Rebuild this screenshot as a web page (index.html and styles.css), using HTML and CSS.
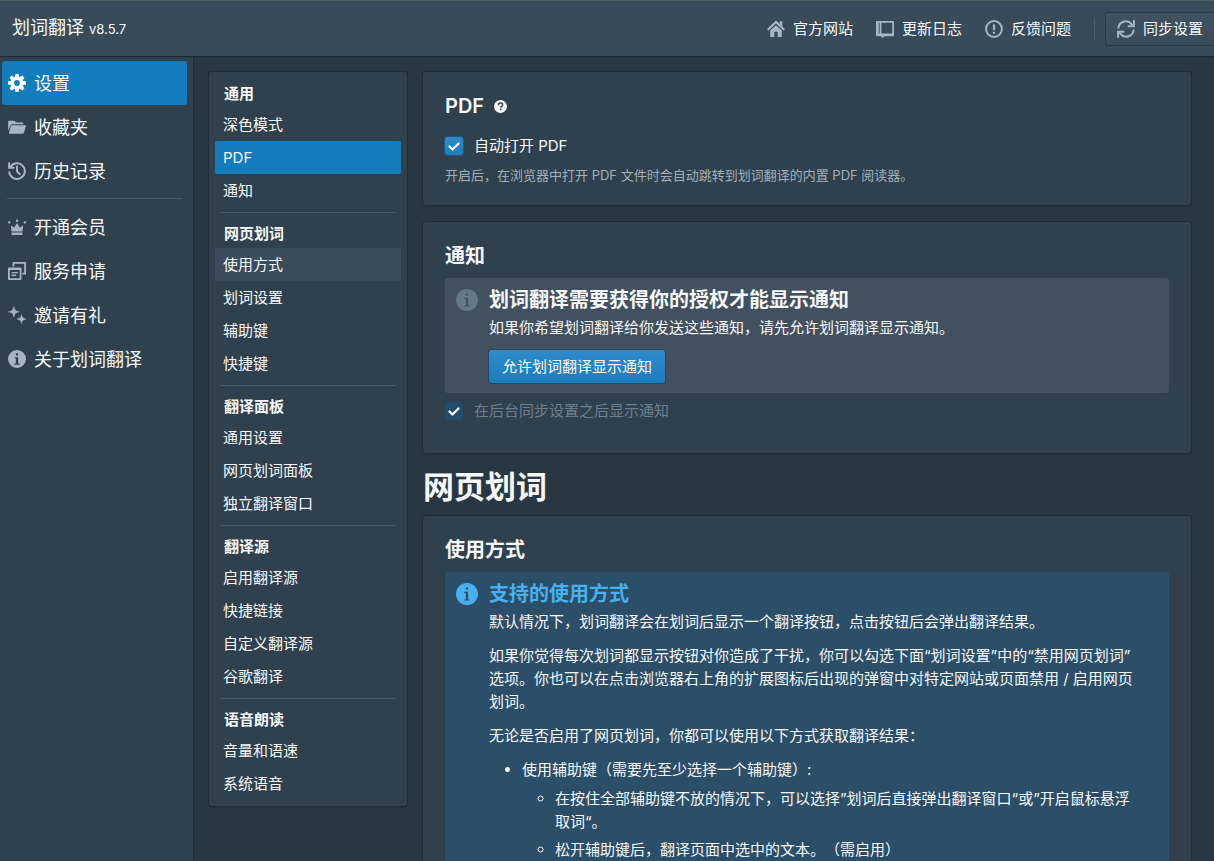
FILE: index.html
```html
<!DOCTYPE html>
<html lang="zh-CN">
<head>
<meta charset="utf-8">
<meta name="viewport" content="width=device-width, initial-scale=1">
<title>划词翻译 - 设置</title>
<link rel="stylesheet" href="styles.css">
</head>
<body>
<header class="topbar">
  <div class="brand">划词翻译 <small>v8.5.7</small></div>
  <nav class="toplinks">
    <a class="toplink" href="#site"><svg class="icon" viewBox="0 0 20 20"><path d="M1.500 10.300 10 2.300l8.500 8" fill="none" stroke="currentColor" stroke-width="2.400" stroke-linecap="round"/><path d="M14 1.500h3v6l-3-3z"/><path d="M3.500 11.700 10 5.700l6.500 6V18a1 1 0 0 1-1 1H12v-5a1 1 0 0 0-1-1H9a1 1 0 0 0-1 1v5H4.500a1 1 0 0 1-1-1z"/></svg>官方网站</a>
    <a class="toplink" href="#log"><svg class="icon" viewBox="0 0 20 20"><path fill-rule="evenodd" d="M1 1h18a1 1 0 0 1 1 1v15a1 1 0 0 1-1 1H9v2l-1.500-1L6 20v-2H1a1 1 0 0 1-1-1V2a1 1 0 0 1 1-1M6 3v12h12V3zM3 3v12h1V3z"/></svg>更新日志</a>
    <a class="toplink" href="#issue"><svg class="icon" viewBox="0 0 20 20"><circle cx="10" cy="10" r="8.800" fill="none" stroke="currentColor" stroke-width="2.200"/><path d="M8.800 5h2.400v6.500H8.800zM8.800 13h2.400v2.200H8.800z"/></svg>反馈问题</a>
    <span class="vline"></span>
    <button class="sync" type="button"><svg class="icon" viewBox="0 0 20 20"><g fill="none" stroke="currentColor" stroke-width="2.200"><path d="M1.500 9.500A8.300 8.300 0 0 1 16.200 4.600l1.500 1.500M18.500 10.500A8.300 8.300 0 0 1 3.800 15.400l-1.500-1.500"/><path d="M18.800 1v6h-6M1.200 19v-6h6" stroke-linecap="round"/></g></svg>同步设置</button>
  </nav>
</header>
<div class="shell">
  <nav class="sidebar">
    <a class="side-item active" href="#settings"><svg class="icon" viewBox="0 0 20 20"><g fill="currentColor"><path fill-rule="evenodd" d="M10 2.800a7.200 7.200 0 1 0 0 14.400 7.200 7.200 0 0 0 0-14.400M10 6.800a3.200 3.200 0 1 1 0 6.400 3.200 3.200 0 0 1 0-6.400"/><path id="tooth" d="M8.300 0h3.400l.8 4h-5z"/><use href="#tooth" transform="rotate(45 10 10)"/><use href="#tooth" transform="rotate(90 10 10)"/><use href="#tooth" transform="rotate(135 10 10)"/><use href="#tooth" transform="rotate(180 10 10)"/><use href="#tooth" transform="rotate(225 10 10)"/><use href="#tooth" transform="rotate(270 10 10)"/><use href="#tooth" transform="rotate(315 10 10)"/></g></svg>设置</a>
    <a class="side-item" href="#fav"><svg class="icon" viewBox="0 0 20 20"><path d="M.200 14.500V4c0-.6.400-1 1-1h5.500c.3 0 .5.100.7.300L9 5h7c.6 0 1 .4 1 1v1H4.500c-.7 0-1.300.4-1.500 1z"/><path d="M4.300 8H19c.7 0 1.100.6.900 1.200l-2.300 7.600c-.1.400-.5.700-.9.700H1.900c-.7 0-1.100-.6-.9-1.200l2.400-7.600c.1-.4.500-.7.900-.7"/></svg>收藏夹</a>
    <a class="side-item" href="#history"><svg class="icon" viewBox="0 0 20 20"><g fill="none" stroke="currentColor" stroke-width="2.200" stroke-linecap="round"><path d="M2.600 5.500A8.700 8.700 0 1 1 1.400 11.500M1.200 1.500v5h5M10 5v5.500l3 3"/></g></svg>历史记录</a>
    <hr>
    <a class="side-item" href="#vip"><svg class="icon" viewBox="0 0 20 20"><path d="M4 15 3 8.200l4 2.300L10 5.500l3 5 4-2.300L16 15zM4 16h12v3H4z"/><circle cx="1.300" cy="4.800" r="1.300"/><circle cx="10" cy="3" r="1.400"/><circle cx="18.700" cy="4.800" r="1.300"/></svg>开通会员</a>
    <a class="side-item" href="#service"><svg class="icon" viewBox="0 0 20 20"><path fill-rule="evenodd" d="M1 6h13a1 1 0 0 1 1 1v12a1 1 0 0 1-1 1H1a1 1 0 0 1-1-1V7a1 1 0 0 1 1-1m1 3v9h11V9z"/><path d="M6 0h13a1 1 0 0 1 1 1v12a1 1 0 0 1-1 1h-3v-2h2V2H7v3H5V1a1 1 0 0 1 1-1M4 11h7v1.500H4zM4 14h5v1.500H4z"/></svg>服务申请</a>
    <a class="side-item" href="#invite"><svg class="icon" viewBox="0 0 20 20"><path d="M6.500.500c.7 4 1.800 5.200 6 6-4.200.8-5.300 2-6 6-.7-4-1.800-5.200-6-6 4.200-.8 5.300-2 6-6M15 9.500c.6 3.400 1.800 4.500 5 5-3.200.5-4.400 1.600-5 5-.6-3.400-1.800-4.500-5-5 3.200-.5 4.400-1.600 5-5" stroke="currentColor" stroke-width=".6"/></svg>邀请有礼</a>
    <a class="side-item" href="#about"><svg class="icon" viewBox="0 0 20 20"><path fill-rule="evenodd" d="M10 0a10 10 0 1 0 0 20 10 10 0 0 0 0-20M8.700 3.500h2.600V6H8.700zM7.500 8h3.800v7H13v1.300H7V15h1.700V9.300H7.500z"/></svg>关于划词翻译</a>
  </nav>
  <main class="main">
    <nav class="card submenu">
      <h6>通用</h6>
      <a href="#dark">深色模式</a>
      <a class="active" href="#pdf">PDF</a>
      <a href="#notice">通知</a>
      <hr>
      <h6>网页划词</h6>
      <a class="hover" href="#usage">使用方式</a>
      <a href="#select">划词设置</a>
      <a href="#modifier">辅助键</a>
      <a href="#shortcut">快捷键</a>
      <hr>
      <h6>翻译面板</h6>
      <a href="#general">通用设置</a>
      <a href="#panel">网页划词面板</a>
      <a href="#window">独立翻译窗口</a>
      <hr>
      <h6>翻译源</h6>
      <a href="#sources">启用翻译源</a>
      <a href="#links">快捷链接</a>
      <a href="#custom">自定义翻译源</a>
      <a href="#google">谷歌翻译</a>
      <hr>
      <h6>语音朗读</h6>
      <a href="#volume">音量和语速</a>
      <a href="#voice">系统语音</a>
    </nav>
    <div class="content">
      <section class="card panel" id="pdf">
        <h5>PDF <svg class="help" viewBox="0 0 20 20"><circle cx="10" cy="10" r="10"/><path d="M6.800 8c0-2 1.300-3.300 3.300-3.300S13.300 5.900 13.300 7.500c0 2.200-3 2.300-3 4.500" fill="none" stroke="#2f404d" stroke-width="2.200"/><path d="M9 13.500h2.500v2.300H9z" fill="#2f404d"/></svg></h5>
        <label class="check"><input type="checkbox" checked>自动打开 PDF</label>
        <p class="hint">开启后，在浏览器中打开 PDF 文件时会自动跳转到划词翻译的内置 PDF 阅读器。</p>
      </section>
      <section class="card panel" id="notice">
        <h5>通知</h5>
        <div class="callout">
          <svg class="info" viewBox="0 0 20 20"><path fill-rule="evenodd" d="M10 0a10 10 0 1 0 0 20 10 10 0 0 0 0-20M9 4h2v2H9zM7.500 8H11v7h1.500v1h-5v-1H9V9H7.500z"/></svg>
          <div class="callout-body">
            <h5>划词翻译需要获得你的授权才能显示通知</h5>
            <p>如果你希望划词翻译给你发送这些通知，请先允许划词翻译显示通知。</p>
            <button class="primary" type="button">允许划词翻译显示通知</button>
          </div>
        </div>
        <label class="check disabled"><input type="checkbox" checked disabled>在后台同步设置之后显示通知</label>
      </section>
      <h2>网页划词</h2>
      <section class="card panel" id="usage">
        <h5>使用方式</h5>
        <div class="callout blue">
          <svg class="info" viewBox="0 0 20 20"><path fill-rule="evenodd" d="M10 0a10 10 0 1 0 0 20 10 10 0 0 0 0-20M9 4h2v2H9zM7.500 8H11v7h1.500v1h-5v-1H9V9H7.500z"/></svg>
          <div class="callout-body">
            <h5>支持的使用方式</h5>
            <p>默认情况下，划词翻译会在划词后显示一个翻译按钮，点击按钮后会弹出翻译结果。</p>
            <p>如果你觉得每次划词都显示按钮对你造成了干扰，你可以勾选下面“划词设置”中的“禁用网页划词”选项。你也可以在点击浏览器右上角的扩展图标后出现的弹窗中对特定网站或页面禁用 / 启用网页划词。</p>
            <p>无论是否启用了网页划词，你都可以使用以下方式获取翻译结果：</p>
            <ul>
              <li>使用辅助键（需要先至少选择一个辅助键）:
                <ul>
                  <li>在按住全部辅助键不放的情况下，可以选择”划词后直接弹出翻译窗口“或”开启鼠标悬浮取词“。</li>
                  <li>松开辅助键后，翻译页面中选中的文本。（需启用）</li>
                </ul>
              </li>
            </ul>
          </div>
        </div>
      </section>
    </div>
  </main>
</div>
</body>
</html>
```
FILE: styles.css
```css
* { box-sizing: border-box; }
body {
  margin: 0;
  height: 100vh;
  overflow: hidden;
  display: flex;
  flex-direction: column;
  background: #293742;
  color: #f5f8fa;
  font: 15px/23px Inter, "Noto Sans CJK SC", sans-serif;
  text-spacing-trim: space-all;
}
a { color: inherit; text-decoration: none; }
button { font: inherit; color: inherit; }
h2, h5, h6, p, ul { margin: 0; }
svg { fill: currentColor; flex: none; }
.icon { width: 18px; height: 18px; color: #a7b6c2; }
hr { border: 0; border-top: 1px solid #475864; }

.topbar {
  flex: none;
  display: flex;
  justify-content: space-between;
  align-items: center;
  height: 56px;
  padding-left: 12px;
  background: #394b59;
  border-top: 1px solid #545e60;
  box-shadow: 0 1px 1px #1d2a35;
  position: relative;
  overflow: hidden;
}
.brand { font-size: 18px; }
.brand small { font-size: 13px; }
.toplinks { display: flex; align-items: center; }
.toplink { display: flex; align-items: center; gap: 8px; margin-right: 23px; }
.vline { width: 1px; height: 22px; background: #4b5b68; margin-right: 10px; }
.sync {
  display: flex;
  align-items: center;
  gap: 8px;
  height: 34px;
  padding: 0 11px;
  border: 1px solid #2b3a46;
  border-right: 0;
  border-radius: 3px 0 0 3px;
  background: linear-gradient(#415261, #3a4a58);
}

.shell { flex: 1; min-height: 0; display: flex; }
.sidebar {
  flex: none;
  width: 194px;
  padding: 5px 6px 0 2px;
  background: #30404d;
  border-right: 1px solid #202b33;
}
.side-item {
  display: flex;
  align-items: center;
  gap: 8px;
  height: 44px;
  padding-left: 6px;
  border-radius: 3px;
  font-size: 18px;
}
.side-item.active { background: #137cbd; }
.side-item.active .icon { color: #fff; }
.sidebar hr { margin: 5px 5px 6px; }

.main {
  flex: 1;
  min-width: 0;
  display: flex;
  align-items: flex-start;
  gap: 16px;
  padding: 16px 23px 0 15px;
  overflow-y: auto;
  scrollbar-width: none;
}
.card {
  background: #30404d;
  border-radius: 3px;
  box-shadow: 0 0 0 1px #202d37, 0 1px 2px #202d37;
}
.submenu { flex: none; width: 198px; padding: 5px 6px 6px; }
.submenu h6 { font-size: 15px; line-height: 18px; font-weight: 700; padding: 8px 9px 5px; }
.submenu a { display: block; line-height: 33px; padding-left: 8px; border-radius: 2px; }
.submenu hr { margin: 5px 5px 4px; }
.submenu .active { background: #137cbd; }
.submenu .hover { background: #3d4c5a; }

.content { flex: 1; min-width: 0; }
.panel { padding: 22px; margin-bottom: 17px; }
h5 { font-size: 20px; line-height: 24px; font-weight: 600; }
.panel > h5 { display: flex; align-items: center; gap: 10px; margin-bottom: 10px; }
.help { width: 13px; height: 13px; }
.check { display: flex; align-items: center; gap: 11px; margin-top: 16px; line-height: 24px; }
.check input {
  appearance: none;
  width: 18px;
  height: 18px;
  margin: 0;
  border-radius: 3px;
  background: url("data:image/svg+xml,%3Csvg xmlns='http://www.w3.org/2000/svg' viewBox='0 0 18 18'%3E%3Cpath d='M4.500 9.500l3 3 6-6' fill='none' stroke='white' stroke-width='2.200' stroke-linecap='round' stroke-linejoin='round'/%3E%3C/svg%3E"), linear-gradient(#2f8bc9, #1b7fbe);
  box-shadow: 0 0 0 1px #21577e;
}
.check.disabled { margin-top: 6px; margin-bottom: 8px; color: #6d7f8c; }
.check.disabled input {
  background-color: #224c6c;
  background-image: url("data:image/svg+xml,%3Csvg xmlns='http://www.w3.org/2000/svg' viewBox='0 0 18 18'%3E%3Cpath d='M4.500 9.500l3 3 6-6' fill='none' stroke='white' stroke-width='2.200' stroke-linecap='round' stroke-linejoin='round'/%3E%3C/svg%3E");
  box-shadow: none;
}
.hint { font-size: 13px; line-height: 18px; margin-top: 8px; margin-bottom: -1px; color: #a0afba; }
.callout { display: flex; gap: 11px; padding: 10px 30px 10px 11px; border-radius: 3px; background: #43505d; }
.info { width: 22px; height: 22px; margin-top: 1px; color: #667785; }
.callout-body { min-width: 0; }
.callout h5 { margin-bottom: 4px; }
.primary {
  display: block;
  height: 33px;
  margin-top: 11px;
  padding: 0 13px;
  border: 0;
  border-radius: 3px;
  background: linear-gradient(#2f8bcb, #1b7dbd);
  box-shadow: 0 0 0 1px #2c465a;
}
.blue { background: #2c4f69; }
.blue h5, .blue .info { color: #48aff0; }
.blue p { margin-bottom: 11px; }
ul { padding-left: 33px; }
li ul { margin-top: 6px; }
li li { margin-bottom: 5px; }
h2 { font-size: 31px; line-height: 34px; font-weight: 700; margin-bottom: 12px; }
```
